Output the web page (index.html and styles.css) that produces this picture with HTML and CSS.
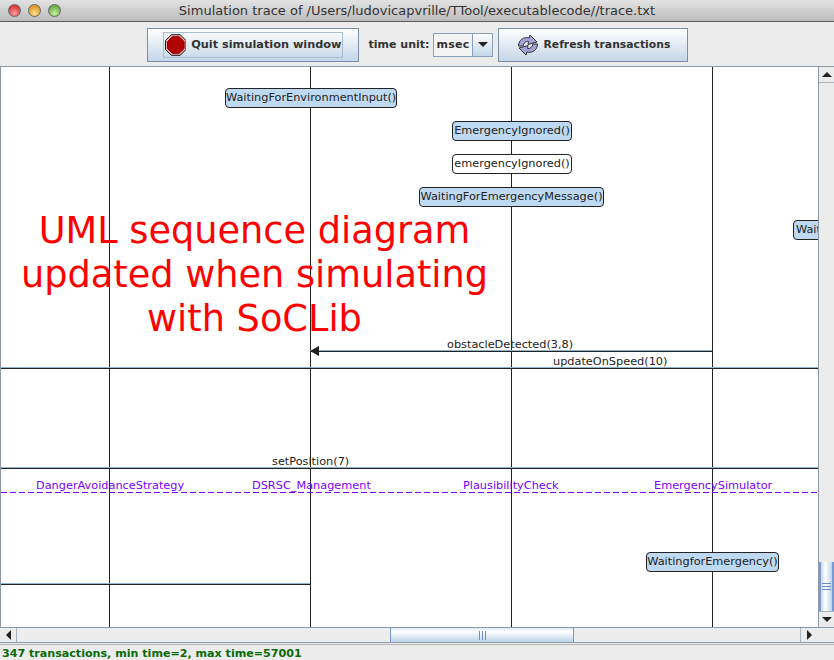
FILE: index.html

```html
<!DOCTYPE html>
<html lang="en">
<head>
  <meta charset="UTF-8">
  <title>Simulation trace</title>
  <link rel="stylesheet" href="styles.css">
</head>
<body>

<div class="window">
  <div class="titlebar">
    <div class="lights">
      <span class="light red"></span>
      <span class="light yellow"></span>
      <span class="light green"></span>
    </div>
    <div class="title">Simulation trace of /Users/ludovicapvrille/TTool/executablecode//trace.txt</div>
  </div>

  <div class="toolbar">
    <button class="btn btn-quit">
      <span class="btn-focus">
        <svg width="22" height="22" viewBox="0 0 22 22">
          <polygon points="6.500,0.500 15.500,0.500 21.500,6.500 21.500,15.500 15.500,21.500 6.500,21.500 0.500,15.500 0.500,6.500" fill="#e8b0b0" stroke="#111" stroke-width="1"/>
          <polygon points="7.500,2.500 14.500,2.500 19.500,7.500 19.500,14.500 14.500,19.500 7.500,19.500 2.500,14.500 2.500,7.500" fill="#b00404" stroke="#8a0000" stroke-width="1"/>
        </svg>
        Quit simulation window
      </span>
    </button>
    <span class="unit-label">time unit:</span>
    <div class="combo">
      <span class="combo-value">msec</span>
      <span class="combo-arrow"><i class="tri-down"></i></span>
    </div>
    <button class="btn btn-refresh">
      <svg width="22" height="22" viewBox="0 0 22 22">
        <path d="M1.500 12 C1.500 6 7 2.500 12 4 L13 1 L20 8 L11 10.500 L11.500 7.500 C9 7 6.500 9 6 12 Z" fill="#a6a2d8" stroke="#333" stroke-width="1"/>
        <path d="M1.500 12 C1.500 6 7 2.500 12 4 L13 1 L20 8 L11 10.500 L11.500 7.500 C9 7 6.500 9 6 12 Z" fill="#a6a2d8" stroke="#333" stroke-width="1" transform="rotate(180 11 11)"/>
      </svg>
      Refresh transactions
    </button>
  </div>

  <div class="middle">
    <div class="canvas">
      <div class="life" style="left:109px"></div>
      <div class="life" style="left:310px"></div>
      <div class="life" style="left:511px"></div>
      <div class="life" style="left:712px"></div>

      <div class="state blue" style="left:225px;top:21px;width:172px">WaitingForEnvironmentInput()</div>
      <div class="state blue" style="left:452px;top:54px;width:120px">EmergencyIgnored()</div>
      <div class="state" style="left:452px;top:87px;width:120px">emergencyIgnored()</div>
      <div class="state blue" style="left:419px;top:120px;width:185px">WaitingForEmergencyMessage()</div>
      <div class="state blue cut" style="left:793px;top:153px;width:60px">Waiting</div>
      <div class="state blue" style="left:646px;top:485px;width:133px">WaitingforEmergency()</div>

      <div class="note">UML sequence diagram<br>updated when simulating<br>with SoCLib</div>

      <div class="msg" style="left:310px;top:283px;width:402px"></div>
      <div class="arrow-head" style="left:310px;top:279px"></div>
      <div class="msg" style="left:0;top:300px;width:818px"></div>
      <div class="msg" style="left:0;top:400px;width:818px"></div>
      <div class="msg" style="left:0;top:516px;width:310px"></div>

      <div class="label" style="left:447px;top:270px">obstacleDetected(3,8)</div>
      <div class="label" style="left:553px;top:287px">updateOnSpeed(10)</div>
      <div class="label" style="left:272px;top:387px">setPosition(7)</div>

      <div class="dash"></div>
      <div class="label purple" style="left:36px;top:411px">DangerAvoidanceStrategy</div>
      <div class="label purple" style="left:252px;top:411px">DSRSC_Management</div>
      <div class="label purple" style="left:463px;top:411px">PlausibilityCheck</div>
      <div class="label purple" style="left:654px;top:411px">EmergencySimulator</div>
    </div>

    <div class="vscroll">
      <div class="sb-btn sb-up"><i class="tri-up"></i></div>
      <div class="vtrack"><div class="vthumb"><i></i><i></i><i></i></div></div>
      <div class="sb-btn sb-down"><i class="tri-down"></i></div>
    </div>
  </div>

  <div class="hscroll">
    <div class="sb-btn sb-left"><i class="tri-left"></i></div>
    <div class="htrack"><div class="hthumb"><i></i><i></i><i></i></div></div>
    <div class="sb-btn sb-right"><i class="tri-right"></i></div>
    <div class="corner"></div>
  </div>

  <div class="status">347 transactions, min time=2, max time=57001</div>
</div>

</body>
</html>
```

FILE: styles.css

```css
* {
  box-sizing: border-box;
}
html, body {
  margin: 0;
  padding: 0;
}
body {
  width: 834px;
  height: 660px;
  overflow: hidden;
  font-family: 'DejaVu Sans', sans-serif;
  background-color: #ececec;
}
.window {
  display: flex;
  flex-direction: column;
  height: 660px;
}

/* title bar */
.titlebar {
  display: flex;
  align-items: center;
  height: 22px;
  flex: none;
  position: relative;
  background: linear-gradient(#e2e2e2, #bcbcbc);
  border-bottom: 1px solid #5a5a5a;
}
.lights {
  display: flex;
  gap: 7px;
  padding-left: 8px;
}
.light {
  width: 13px;
  height: 13px;
  border-radius: 50%;
  border: 1px solid #666;
}
.light.red {
  background: radial-gradient(circle at 50% 75%, #fca0a0, #d83a3a 70%);
}
.light.yellow {
  background: radial-gradient(circle at 50% 75%, #fde08a, #e09a28 70%);
}
.light.green {
  background: radial-gradient(circle at 50% 75%, #c8f0a0, #6cae48 70%);
}
.title {
  position: absolute;
  left: 0;
  right: 0;
  text-align: center;
  font-size: 13px;
  color: #333;
}

/* toolbar */
.toolbar {
  display: flex;
  align-items: center;
  justify-content: center;
  height: 44px;
  flex: none;
  padding-top: 1px;
  padding-left: 1px;
  font-size: 11px;
  font-weight: bold;
  color: #333;
}
.btn {
  display: flex;
  align-items: center;
  height: 34px;
  padding: 0;
  font-family: inherit;
  font-size: 11px;
  font-weight: bold;
  color: #333;
  border: 1px solid #7a8fa6;
  background: linear-gradient(#fff, #eef3f8 30%, #c4d6e8);
}
.btn-quit {
  width: 212px;
  justify-content: center;
  font-size: 11.3px;
}
.btn-focus {
  display: flex;
  align-items: center;
  gap: 5px;
  width: 180px;
  height: 26px;
  border: 1px solid #a8bcd0;
  padding-left: 1px;
  white-space: nowrap;
}
.btn-refresh {
  width: 190px;
  justify-content: center;
  gap: 5px;
  font-size: 10.8px;
}
.unit-label {
  margin-left: 10px;
  margin-right: 4px;
}
.combo {
  display: flex;
  width: 60px;
  height: 24px;
  margin-right: 5px;
  border: 1px solid #8aa0b8;
  background-color: #f4f4f4;
}
.combo-value {
  flex: 1;
  line-height: 22px;
  padding-left: 2px;
  letter-spacing: .3px;
}
.combo-arrow {
  display: flex;
  align-items: center;
  justify-content: center;
  width: 20px;
  border-left: 1px solid #8aa0b8;
  background: linear-gradient(#fff, #c4d6e8);
}

/* triangles */
i[class^="tri-"] {
  display: block;
  width: 0;
  height: 0;
}
.tri-down {
  border-left: 5px solid transparent;
  border-right: 5px solid transparent;
  border-top: 5px solid #222;
}
.tri-up {
  border-left: 5px solid transparent;
  border-right: 5px solid transparent;
  border-bottom: 5px solid #222;
}
.tri-left {
  border-top: 5px solid transparent;
  border-bottom: 5px solid transparent;
  border-right: 5px solid #222;
}
.tri-right {
  border-top: 5px solid transparent;
  border-bottom: 5px solid transparent;
  border-left: 5px solid #222;
}

/* diagram */
.middle {
  display: flex;
  height: 562px;
  flex: none;
  border-top: 1px solid #8c9aa8;
  border-bottom: 1px solid #8c9aa8;
}
.canvas {
  position: relative;
  width: 818px;
  overflow: hidden;
  background-color: #fff;
  border-left: 1px solid #8c9aa8;
  font-size: 11.3px;
  color: #222;
}
.life {
  position: absolute;
  top: 0;
  bottom: 0;
  width: 1px;
  margin-left: -1px;
  background-color: #222;
}
.state {
  position: absolute;
  height: 20px;
  margin-left: -1px;
  line-height: 18px;
  text-align: center;
  white-space: nowrap;
  background-color: #fff;
  border: 1px solid #222;
  border-radius: 4px;
}
.state.blue {
  background-color: #bfd9f0;
}
.state.cut {
  text-align: left;
  padding-left: 2px;
}
.note {
  position: absolute;
  left: 0;
  top: 142px;
  width: 507px;
  text-align: center;
  font-size: 36.7px;
  line-height: 44px;
  color: #f00;
}
.msg {
  position: absolute;
  height: 2px;
  margin-left: -1px;
  border-top: 1px solid #8fb4cc;
  border-bottom: 1px solid #222;
}
.arrow-head {
  position: absolute;
  margin-left: -1px;
  width: 0;
  height: 0;
  border-top: 5px solid transparent;
  border-bottom: 5px solid transparent;
  border-right: 9px solid #222;
}
.label {
  position: absolute;
  margin-left: -1px;
  white-space: nowrap;
  line-height: 16px;
}
.label.purple {
  color: #7a00ff;
}
.dash {
  position: absolute;
  left: 0;
  right: 0;
  top: 425px;
  height: 1px;
  background: repeating-linear-gradient(90deg, #7a00ff 0 6px, transparent 6px 9px);
}

/* scrollbars */
.vscroll {
  display: flex;
  flex-direction: column;
  width: 16px;
  border-left: 1px solid #8c9aa8;
}
.sb-btn {
  display: flex;
  align-items: center;
  justify-content: center;
  flex: none;
  background-color: #ececec;
}
.sb-up, .sb-down {
  height: 16px;
}
.sb-up {
  border-bottom: 1px solid #a8b4c0;
}
.sb-down {
  border-top: 1px solid #a8b4c0;
}
.vtrack {
  flex: 1;
  display: flex;
  flex-direction: column;
  justify-content: flex-end;
  background-color: #ececec;
}
.vthumb {
  display: flex;
  flex-direction: column;
  align-items: center;
  justify-content: center;
  gap: 2px;
  height: 49px;
  border: 1px solid #7a9ad0;
  border-width: 0 2px;
  background: linear-gradient(90deg, #c8daee, #fff 40%, #bcd2ea);
}
.vthumb i {
  display: block;
  width: 9px;
  height: 1px;
  background-color: #6a8cc8;
}
.hscroll {
  display: flex;
  height: 15px;
  flex: none;
  border-bottom: 1px solid #8c9aa8;
}
.sb-left, .sb-right {
  width: 17px;
  border-right: 1px solid #a8b4c0;
}
.sb-right {
  margin-right: 1px;
  border-left: 1px solid #a8b4c0;
  border-right: 0;
}
.htrack {
  flex: 1;
  background-color: #ececec;
  padding-left: 373px;
}
.hthumb {
  display: flex;
  align-items: center;
  justify-content: center;
  gap: 2px;
  width: 184px;
  height: 14px;
  border: 1px solid #7a9ad0;
  border-width: 0 1px;
  background: linear-gradient(#dce8f5, #fff 25%, #bcd2ea);
}
.hthumb i {
  display: block;
  width: 1px;
  height: 9px;
  background-color: #6a8cc8;
}
.corner {
  width: 16px;
  background-color: #ececec;
}
.status {
  flex: none;
  height: 17px;
  margin-top: 1px;
  padding-left: 2px;
  line-height: 18px;
  font-size: 11.1px;
  font-weight: bold;
  color: #0a6a0a;
  border-top: 1px solid #b4b4b4;
  white-space: nowrap;
}
```
